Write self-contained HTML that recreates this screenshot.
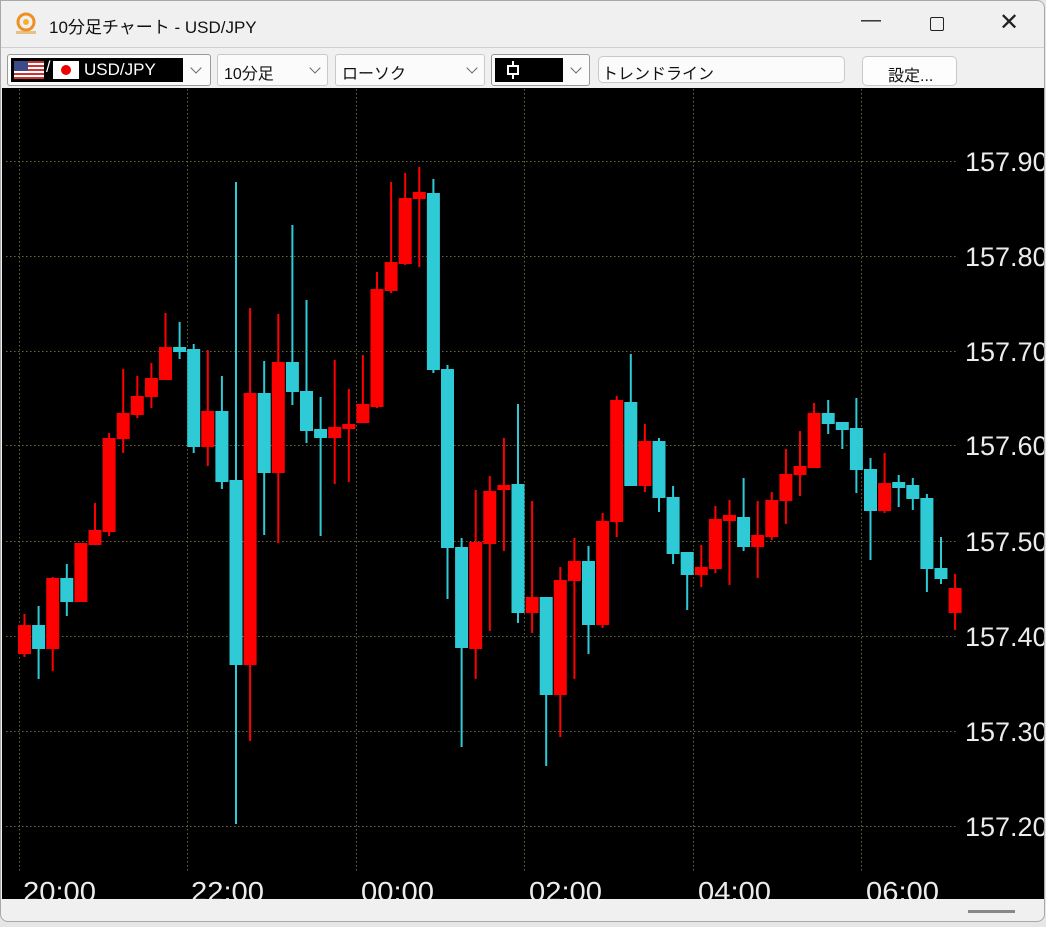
<!DOCTYPE html>
<html><head><meta charset="utf-8">
<style>
*{margin:0;padding:0;box-sizing:border-box}
body{width:1046px;height:927px;overflow:hidden;background:#e6e6e6;font-family:"Liberation Sans","Noto Sans CJK JP",sans-serif;position:relative}
.win{position:absolute;left:0;top:0;width:1045px;height:922px;background:#f0f0f0;border:1px solid #a8a8a8;border-radius:0 8px 8px 8px;overflow:hidden}
.title{position:absolute;left:48px;top:12px;font-size:17px;color:#111}
.ctl{position:absolute;top:8px;font-size:20px;color:#222}
.box{position:absolute;top:53px;height:32px;background:#fbfbfb;border:1px solid #c9c9c9;border-radius:3px;font-size:16px;color:#111}
.chev{position:absolute;right:6px;top:9px;width:8px;height:8px;border-right:1.3px solid #666;border-bottom:1.3px solid #666;transform:rotate(45deg)}
</style></head><body>
<div class="win">
  <svg style="position:absolute;left:13px;top:10px" width="26" height="26" viewBox="0 0 26 26">
    <circle cx="12" cy="11" r="8" fill="none" stroke="#f09020" stroke-width="3"/>
    <circle cx="12" cy="11" r="3" fill="#f6b030"/>
    <rect x="2" y="20" width="20" height="3" fill="#e0a040" opacity=".6"/>
  </svg>
  <div class="title">10分足チャート - USD/JPY</div>
  <div class="ctl" style="left:860px;">—</div>
  <div style="position:absolute;left:929px;top:16px;width:14px;height:14px;border:1.6px solid #222;border-radius:2px"></div>
  <div class="ctl" style="left:998px;top:7px;font-size:24px">✕</div>
  <div style="position:absolute;left:0;top:46px;width:1046px;height:1px;background:#d0d0d0"></div>

  <div class="box" style="left:6px;width:204px;border-color:#9a9a9a">
    <div style="position:absolute;left:3px;top:3px;width:172px;height:24px;background:#000"></div>
    <div style="position:absolute;left:6px;top:6px;width:30px;height:18px;background:repeating-linear-gradient(#c33 0 2px,#fff 2px 4px)"><div style="width:14px;height:10px;background:#3c4a8a"></div></div>
    <div style="position:absolute;left:38px;top:4px;color:#fff;font-size:16px">/</div>
    <div style="position:absolute;left:45px;top:6px;width:26px;height:18px;background:#fff"><div style="margin:4px auto;width:10px;height:10px;border-radius:50%;background:#e00"></div></div>
    <div style="position:absolute;left:76px;top:5px;color:#fff;font-size:17px">USD/JPY</div>
    <div class="chev" style="right:10px"></div>
  </div>
  <div class="box" style="left:216px;width:111px"><span style="position:absolute;left:6px;top:5px">10分足</span><div class="chev" style="right:8px"></div></div>
  <div class="box" style="left:334px;width:150px"><span style="position:absolute;left:6px;top:5px">ローソク</span><div class="chev" style="right:8px"></div></div>
  <div class="box" style="left:490px;width:99px;border-color:#9a9a9a">
    <div style="position:absolute;left:3px;top:3px;width:68px;height:24px;background:#000"></div>
    <svg style="position:absolute;left:14px;top:5px" width="14" height="20"><line x1="7" y1="1" x2="7" y2="19" stroke="#fff" stroke-width="2"/><rect x="2" y="6" width="10" height="8" fill="#000" stroke="#fff" stroke-width="2"/></svg>
    <div class="chev" style="right:9px"></div>
  </div>
  <div class="box" style="left:597px;width:247px;top:55px;height:27px;border-radius:5px"><span style="position:absolute;left:3px;top:3px">トレンドライン</span></div>
  <div class="box" style="left:861px;width:95px;top:55px;height:30px;border-radius:5px;background:#fdfdfd"><span style="position:absolute;left:25px;top:5px">設定...</span></div>

  <svg style="position:absolute;left:1px;top:87px;background:#000" width="1042" height="811" viewBox="1 87 1042 811">
    <rect x="1" y="87" width="1042" height="811" fill="#000"/>
    <g stroke="#6b6b3a" stroke-width="1" stroke-dasharray="1.5 2.5">
      <line x1="18.5" y1="88" x2="18.5" y2="870"/><line x1="186.5" y1="88" x2="186.5" y2="870"/><line x1="355.5" y1="88" x2="355.5" y2="870"/><line x1="523.5" y1="88" x2="523.5" y2="870"/><line x1="692.5" y1="88" x2="692.5" y2="870"/><line x1="860.5" y1="88" x2="860.5" y2="870"/>
      <line x1="5" y1="160.5" x2="957" y2="160.5"/><line x1="5" y1="255.5" x2="957" y2="255.5"/><line x1="5" y1="350.5" x2="957" y2="350.5"/><line x1="5" y1="444.5" x2="957" y2="444.5"/><line x1="5" y1="540.5" x2="957" y2="540.5"/><line x1="5" y1="635.5" x2="957" y2="635.5"/><line x1="5" y1="730.5" x2="957" y2="730.5"/><line x1="5" y1="825.5" x2="957" y2="825.5"/>
    </g>
    <g fill="#ececec" font-family="Liberation Sans, sans-serif" font-size="27">
      <text x="964" y="170">157.90</text><text x="964" y="265">157.80</text><text x="964" y="360">157.70</text><text x="964" y="454">157.60</text><text x="964" y="550">157.50</text><text x="964" y="645">157.40</text><text x="964" y="740">157.30</text><text x="964" y="835">157.20</text>
    </g>
    <g fill="#ececec" font-family="Liberation Sans, sans-serif" font-size="28">
      <text x="22" y="900" textLength="73" lengthAdjust="spacingAndGlyphs">20:00</text>
      <text x="190" y="900" textLength="73" lengthAdjust="spacingAndGlyphs">22:00</text>
      <text x="360" y="900" textLength="73" lengthAdjust="spacingAndGlyphs">00:00</text>
      <text x="528" y="900" textLength="73" lengthAdjust="spacingAndGlyphs">02:00</text>
      <text x="697" y="900" textLength="73" lengthAdjust="spacingAndGlyphs">04:00</text>
      <text x="865" y="900" textLength="73" lengthAdjust="spacingAndGlyphs">06:00</text>
    </g>
    <g stroke-width="2">
<g stroke="#ff0000" fill="#ff0000">
<line x1="23.5" y1="613" x2="23.5" y2="656"/><rect x="18" y="625" width="11" height="27"/>
<line x1="51.7" y1="576" x2="51.7" y2="670"/><rect x="46.2" y="578" width="11" height="69"/>
<line x1="79.9" y1="542" x2="79.9" y2="600"/><rect x="74.4" y="543" width="11" height="57"/>
<line x1="94" y1="502" x2="94" y2="543"/><rect x="88.5" y="530" width="11" height="13"/>
<line x1="108.1" y1="432" x2="108.1" y2="535"/><rect x="102.6" y="438" width="11" height="92"/>
<line x1="122.2" y1="368" x2="122.2" y2="452"/><rect x="116.7" y="413" width="11" height="24"/>
<line x1="136.3" y1="375" x2="136.3" y2="417"/><rect x="130.8" y="396" width="11" height="17"/>
<line x1="150.4" y1="362" x2="150.4" y2="407"/><rect x="144.9" y="378" width="11" height="17"/>
<line x1="164.5" y1="312" x2="164.5" y2="378"/><rect x="159" y="347" width="11" height="31"/>
<line x1="206.8" y1="349" x2="206.8" y2="465"/><rect x="201.3" y="411" width="11" height="34"/>
<line x1="249.1" y1="307" x2="249.1" y2="740"/><rect x="243.6" y="393" width="11" height="270"/>
<line x1="277.3" y1="313" x2="277.3" y2="542"/><rect x="271.8" y="362" width="11" height="109"/>
<line x1="333.7" y1="359" x2="333.7" y2="483"/><rect x="328.2" y="427" width="11" height="9"/>
<line x1="347.8" y1="388" x2="347.8" y2="481"/><rect x="342.3" y="424" width="11" height="3"/>
<line x1="361.9" y1="354" x2="361.9" y2="421"/><rect x="356.4" y="404" width="11" height="17"/>
<line x1="376" y1="271" x2="376" y2="407"/><rect x="370.5" y="289" width="11" height="116"/>
<line x1="390.1" y1="181" x2="390.1" y2="292"/><rect x="384.6" y="262" width="11" height="27"/>
<line x1="404.2" y1="172" x2="404.2" y2="264"/><rect x="398.7" y="198" width="11" height="64"/>
<line x1="418.3" y1="166" x2="418.3" y2="266"/><rect x="412.8" y="192" width="11" height="5"/>
<line x1="474.7" y1="489" x2="474.7" y2="678"/><rect x="469.2" y="542" width="11" height="105"/>
<line x1="488.8" y1="475" x2="488.8" y2="630"/><rect x="483.3" y="491" width="11" height="51"/>
<line x1="502.9" y1="437" x2="502.9" y2="550"/><rect x="497.4" y="485" width="11" height="3"/>
<line x1="531.1" y1="500" x2="531.1" y2="632"/><rect x="525.6" y="597" width="11" height="14"/>
<line x1="559.3" y1="566" x2="559.3" y2="736"/><rect x="553.8" y="580" width="11" height="113"/>
<line x1="573.4" y1="537" x2="573.4" y2="678"/><rect x="567.9" y="561" width="11" height="18"/>
<line x1="601.6" y1="512" x2="601.6" y2="627"/><rect x="596.1" y="521" width="11" height="102"/>
<line x1="615.7" y1="395" x2="615.7" y2="536"/><rect x="610.2" y="400" width="11" height="120"/>
<line x1="643.9" y1="423" x2="643.9" y2="491"/><rect x="638.4" y="441" width="11" height="43"/>
<line x1="700.3" y1="544" x2="700.3" y2="586"/><rect x="694.8" y="567" width="11" height="6"/>
<line x1="714.4" y1="505" x2="714.4" y2="572"/><rect x="708.9" y="519" width="11" height="48"/>
<line x1="728.5" y1="499" x2="728.5" y2="584"/><rect x="723" y="515" width="11" height="4"/>
<line x1="756.7" y1="500" x2="756.7" y2="577"/><rect x="751.2" y="535" width="11" height="10"/>
<line x1="770.8" y1="491" x2="770.8" y2="539"/><rect x="765.3" y="500" width="11" height="35"/>
<line x1="784.9" y1="448" x2="784.9" y2="523"/><rect x="779.4" y="474" width="11" height="25"/>
<line x1="799" y1="430" x2="799" y2="495"/><rect x="793.5" y="466" width="11" height="7"/>
<line x1="813.1" y1="402" x2="813.1" y2="466"/><rect x="807.6" y="413" width="11" height="53"/>
<line x1="883.6" y1="452" x2="883.6" y2="512"/><rect x="878.1" y="483" width="11" height="26"/>
<line x1="954.1" y1="573" x2="954.1" y2="629"/><rect x="948.6" y="588" width="11" height="23"/>
</g>
<g stroke="#2ecbd6" fill="#2ecbd6">
<line x1="37.6" y1="605" x2="37.6" y2="678"/><rect x="32.1" y="625" width="11" height="22"/>
<line x1="65.8" y1="563" x2="65.8" y2="615"/><rect x="60.3" y="578" width="11" height="22"/>
<line x1="178.6" y1="321" x2="178.6" y2="358"/><rect x="173.1" y="347" width="11" height="3"/>
<line x1="192.7" y1="343" x2="192.7" y2="452"/><rect x="187.2" y="349" width="11" height="96"/>
<line x1="220.9" y1="375" x2="220.9" y2="488"/><rect x="215.4" y="411" width="11" height="69"/>
<line x1="235" y1="181" x2="235" y2="823"/><rect x="229.5" y="480" width="11" height="183"/>
<line x1="263.2" y1="360" x2="263.2" y2="534"/><rect x="257.7" y="393" width="11" height="78"/>
<line x1="291.4" y1="224" x2="291.4" y2="404"/><rect x="285.9" y="362" width="11" height="28"/>
<line x1="305.5" y1="299" x2="305.5" y2="442"/><rect x="300" y="391" width="11" height="38"/>
<line x1="319.6" y1="396" x2="319.6" y2="535"/><rect x="314.1" y="429" width="11" height="7"/>
<line x1="432.4" y1="178" x2="432.4" y2="372"/><rect x="426.9" y="193" width="11" height="175"/>
<line x1="446.5" y1="364" x2="446.5" y2="598"/><rect x="441" y="369" width="11" height="177"/>
<line x1="460.6" y1="537" x2="460.6" y2="746"/><rect x="455.1" y="547" width="11" height="99"/>
<line x1="517" y1="403" x2="517" y2="622"/><rect x="511.5" y="484" width="11" height="127"/>
<line x1="545.2" y1="597" x2="545.2" y2="765"/><rect x="539.7" y="597" width="11" height="96"/>
<line x1="587.5" y1="545" x2="587.5" y2="653"/><rect x="582" y="561" width="11" height="62"/>
<line x1="629.8" y1="353" x2="629.8" y2="484"/><rect x="624.3" y="402" width="11" height="82"/>
<line x1="658" y1="437" x2="658" y2="511"/><rect x="652.5" y="441" width="11" height="55"/>
<line x1="672.1" y1="485" x2="672.1" y2="563"/><rect x="666.6" y="497" width="11" height="55"/>
<line x1="686.2" y1="552" x2="686.2" y2="609"/><rect x="680.7" y="552" width="11" height="21"/>
<line x1="742.6" y1="477" x2="742.6" y2="550"/><rect x="737.1" y="517" width="11" height="28"/>
<line x1="827.2" y1="399" x2="827.2" y2="433"/><rect x="821.7" y="413" width="11" height="9"/>
<line x1="841.3" y1="422" x2="841.3" y2="448"/><rect x="835.8" y="422" width="11" height="6"/>
<line x1="855.4" y1="397" x2="855.4" y2="492"/><rect x="849.9" y="428" width="11" height="40"/>
<line x1="869.5" y1="457" x2="869.5" y2="559"/><rect x="864" y="469" width="11" height="40"/>
<line x1="897.7" y1="474" x2="897.7" y2="506"/><rect x="892.2" y="482" width="11" height="4"/>
<line x1="911.8" y1="477" x2="911.8" y2="509"/><rect x="906.3" y="485" width="11" height="12"/>
<line x1="925.9" y1="493" x2="925.9" y2="591"/><rect x="920.4" y="498" width="11" height="69"/>
<line x1="940" y1="536" x2="940" y2="583"/><rect x="934.5" y="568" width="11" height="9"/>
</g>
    </g>
  </svg>
  <div style="position:absolute;left:967px;top:909px;width:47px;height:3px;background:#888"></div>
</div>
</body></html>
